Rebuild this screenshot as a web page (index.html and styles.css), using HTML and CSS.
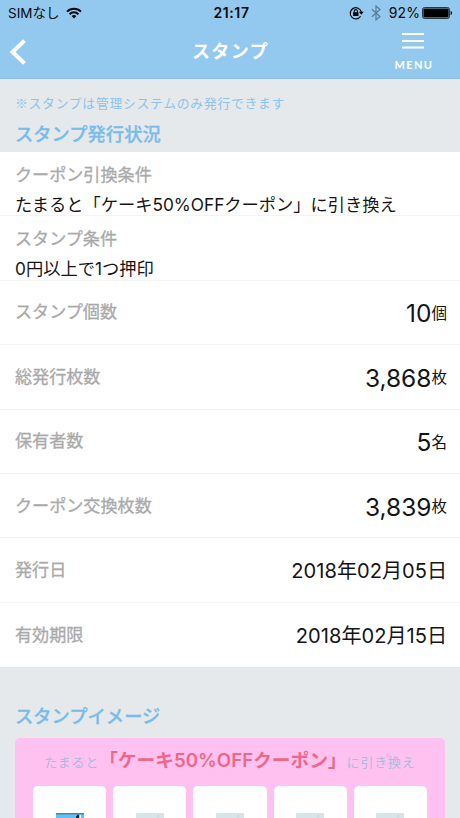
FILE: index.html
```html
<!DOCTYPE html>
<html lang="ja">
<head>
<meta charset="utf-8">
<meta name="viewport" content="width=device-width, initial-scale=1">
<title>スタンプ</title>
<link rel="stylesheet" href="styles.css">
</head>
<body>
<header class="header">
  <div class="status">
    <div class="status-left">
      <span class="carrier">SIMなし</span>
      <svg class="wifi" width="16" height="12" viewBox="0 0 16 12" fill="none" stroke="#07090b" stroke-width="2">
        <path d="M1 4.6a9.9 9.9 0 0 1 14 0M3.6 7.2a6.2 6.2 0 0 1 8.8 0"/>
        <path d="M8 11.6 5.6 9.1a3.4 3.4 0 0 1 4.8 0z" fill="#07090b" stroke="none"/>
      </svg>
    </div>
    <time class="clock">21:17</time>
    <div class="status-right">
      <svg class="lock" width="15" height="14" viewBox="0 0 15 14" fill="none" stroke="#07090b">
        <path d="M11.6 10.3A5.6 5.6 0 1 1 12.3 6" stroke-width="1.2"/>
        <path d="M9.9 5.7h4.8l-2.4 3z" fill="#07090b" stroke="none"/>
        <rect x="4.1" y="6.2" width="5.4" height="3.8" fill="#07090b" stroke="none"/>
        <path d="M5.2 6.5V5.2a1.6 1.6 0 0 1 3.2 0v1.3" stroke-width="1.1"/>
      </svg>
      <svg class="bluetooth" width="10" height="16" viewBox="0 0 10 16" fill="none" stroke="#587d98" stroke-width="1.2">
        <path d="M.8 4.3 9 11.5 5 15V1l4 3.5L.8 11.7"/>
      </svg>
      <span class="percent">92%</span>
      <svg class="battery" width="31" height="12" viewBox="0 0 31 12">
        <rect x=".5" y=".5" width="27" height="11" rx="2" fill="none" stroke="#07090b" stroke-opacity=".75"/>
        <rect x="1.4" y="1.4" width="25.2" height="9.2" rx=".8" fill="#000"/>
        <path d="M28.6 4c1.1.2 1.5 1 1.5 2s-.4 1.8-1.5 2z" fill="#07090b"/>
      </svg>
    </div>
  </div>
  <nav class="nav">
    <svg class="back" width="18" height="26" viewBox="0 0 18 26" fill="none" stroke="#fff" stroke-width="4">
      <path d="M15.5 1.6 3.5 13l12 11.4"/>
    </svg>
    <h1 class="title">スタンプ</h1>
    <div class="menu">
      <svg width="24" height="18" viewBox="0 0 24 18" stroke="#fff" stroke-width="2">
        <path d="M1 2h22M1 9h22M1 15.5h22"/>
      </svg>
      <span class="menu-label">MENU</span>
    </div>
  </nav>
</header>
<main>
  <p class="note">※スタンプは管理システムのみ発行できます</p>
  <h2 class="heading">スタンプ発行状況</h2>
  <dl class="list">
    <div class="row stacked"><dt>クーポン引換条件</dt><dd>たまると「ケーキ50%OFFクーポン」に引き換え</dd></div>
    <div class="row stacked"><dt>スタンプ条件</dt><dd>0円以上で1つ押印</dd></div>
    <div class="row"><dt>スタンプ個数</dt><dd><span class="number">10</span><span class="unit">個</span></dd></div>
    <div class="row"><dt>総発行枚数</dt><dd><span class="number">3,868</span><span class="unit">枚</span></dd></div>
    <div class="row"><dt>保有者数</dt><dd><span class="number">5</span><span class="unit">名</span></dd></div>
    <div class="row"><dt>クーポン交換枚数</dt><dd><span class="number">3,839</span><span class="unit">枚</span></dd></div>
    <div class="row"><dt>発行日</dt><dd class="date">2018年02月05日</dd></div>
    <div class="row"><dt>有効期限</dt><dd class="date">2018年02月15日</dd></div>
  </dl>
  <h2 class="heading image-heading">スタンプイメージ</h2>
  <section class="card">
    <p class="card-text"><span>たまると</span><strong>「ケーキ50%OFFクーポン」</strong><span>に引き換え</span></p>
    <div class="stamps">
      <div class="stamp"><svg width="28" height="18" viewBox="0 0 28 18"><path fill="#64bff5" d="M0 0h28v18H0z"/><path fill="#3e88ad" d="M0 0h28v1.4H0z"/><path fill="#142330" d="m20 4 1.5-2.5L23 2v4h-3z"/><path fill="#eef8fd" d="m23.5 2.5 1.5-1V5h-1.5z"/></svg></div>
      <div class="stamp"><svg width="28" height="18" viewBox="0 0 28 18"><path fill="#d5e5ea" d="M0 0h28v18H0z"/><path fill="#bfd1d6" d="m21 4 2-3v3z"/></svg></div>
      <div class="stamp"><svg width="28" height="18" viewBox="0 0 28 18"><path fill="#d5e5ea" d="M0 0h28v18H0z"/><path fill="#bfd1d6" d="m21 4 2-3v3z"/></svg></div>
      <div class="stamp"><svg width="28" height="18" viewBox="0 0 28 18"><path fill="#d5e5ea" d="M0 0h28v18H0z"/><path fill="#bfd1d6" d="m21 4 2-3v3z"/></svg></div>
      <div class="stamp"><svg width="28" height="18" viewBox="0 0 28 18"><path fill="#d5e5ea" d="M0 0h28v18H0z"/><path fill="#bfd1d6" d="m21 4 2-3v3z"/></svg></div>
    </div>
  </section>
</main>
</body>
</html>
```
FILE: styles.css
```css
* { box-sizing: border-box; margin: 0; padding: 0; }
body {
  height: 818px;
  background: #e5e9ec;
  color: #151515;
  font-family: Inter, "Noto Sans CJK JP", sans-serif;
  white-space: nowrap;
}
svg { display: block; flex: none; }
.header { height: 79px; background: #93c9ef; border-bottom: 1px solid #8fbfe2; }
.status {
  height: 26px;
  display: grid;
  grid-template-columns: 1fr auto 1fr;
  align-items: center;
  padding: 0 7px 0 8px;
  color: #07090b;
  font-size: 14px;
  line-height: 26px;
}
.status-left, .status-right { display: flex; align-items: center; }
.status-right { justify-content: flex-end; }
.carrier { font-size: 13.5px; margin-right: 7px; }
.clock { font-size: 14px; font-weight: 600; letter-spacing: 0.6px; padding-left: 2px; }
.lock { margin-right: 7px; }
.bluetooth { margin-right: 8px; }
.percent { margin-right: 2px; letter-spacing: 0.1px; }
.nav {
  height: 52px;
  display: grid;
  grid-template-columns: 1fr auto 1fr;
  align-items: center;
  padding: 0 28px 0 9px;
  color: #fff;
}
.title { font-size: 18px; font-weight: 700; letter-spacing: 1.4px; line-height: 52px; margin-left: 20px; }
.menu { justify-self: end; display: flex; flex-direction: column; align-items: center; gap: 9px; padding-bottom: 1px; }
.menu-label { font: 700 11px/12px Lato, sans-serif; letter-spacing: 1.4px; margin-right: -1.4px; }
.note {
  padding: 15px 15px 0;
  color: #8dc3ec;
  font-family: "Noto Sans CJK JP", sans-serif;
  font-size: 12.8px;
  letter-spacing: 0.75px;
  line-height: 18px;
}
.heading {
  height: 40px;
  padding-left: 15px;
  color: #7abce9;
  font-size: 18.3px;
  font-weight: 500;
  line-height: 45px;
  -webkit-text-stroke: 0.3px currentColor;
}
.list { height: 515px; display: grid; grid-template-rows: repeat(8, 1fr); background: #fff; }
.row { display: flex; align-items: center; justify-content: space-between; padding: 0 13px 0 15px; border-bottom: 1px solid #f4f4f5; min-height: 0; }
.row:last-child { border-bottom: 0; }
.row dt { color: #a9a9a9; font-size: 17.1px; line-height: 24px; -webkit-text-stroke: 0.3px currentColor; }
.row dd { display: flex; align-items: center; }
.stacked { flex-direction: column; align-items: flex-start; justify-content: flex-start; padding-top: 11px; }
.stacked dd { font-size: 17.25px; line-height: 24px; margin-top: 6px; }
.number { font-size: 24.5px; line-height: 32px; padding-top: 2px; }
.unit { font-size: 15.5px; line-height: 32px; padding-top: 3px; }
.row .date { font-size: 20.1px; line-height: 30px; padding-top: 2px; }
.image-heading { margin-top: 28px; line-height: 43px; }
.card { height: 80px; margin: 3px 15px 0; padding: 0 18px; background: #ffc2f0; border-radius: 5px 5px 0 0; overflow: hidden; }
.card-text { height: 48px; display: flex; align-items: baseline; justify-content: center; line-height: 45px; }
.card-text span { color: #a5bddd; font-size: 12.9px; letter-spacing: 0.9px; }
.card-text strong { color: #ee6788; font-size: 18.7px; font-weight: 600; }
.stamps { display: grid; grid-template-columns: repeat(5, 1fr); gap: 7px; }
.stamp { height: 73px; border-radius: 5px; background: #fff; display: flex; justify-content: center; padding-top: 27px; }
```
